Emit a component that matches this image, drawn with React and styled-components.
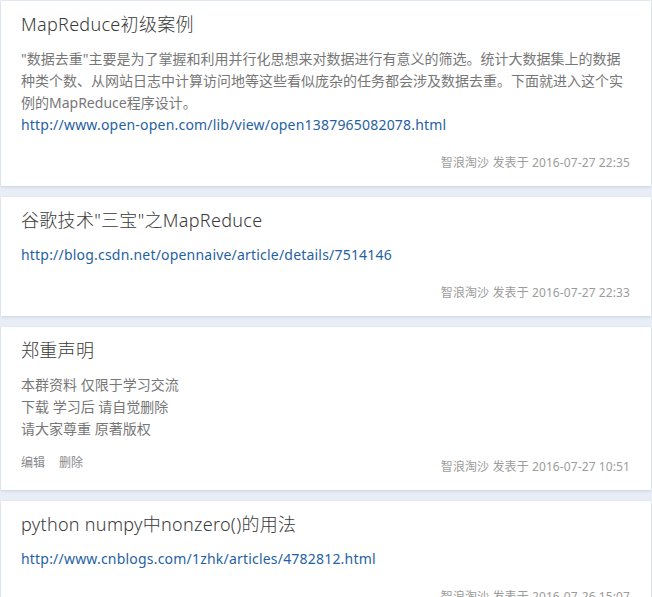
import React from 'react';
import styled, { createGlobalStyle } from 'styled-components';

const GlobalStyle = createGlobalStyle`
	html, body {
		margin: 0;
		padding: 0;
		background-color: #e9eef6;
	}
	body {
		font-family: "Noto Sans", "Noto Sans CJK SC", sans-serif;
		padding: 1px 1px 0 1px;
	}
`

const List = styled.div`
	display: flex;
	flex-direction: column;
	gap: 11px;
`

const Card = styled.div`
	background-color: #fff;
	padding: 11px 21px 14px 20px;
	box-shadow: 0 1px 3px rgba(160, 175, 200, 0.45);
`

const Title = styled.h2`
	margin: 0;
	font-size: 18px;
	font-weight: 300;
	line-height: 24px;
	letter-spacing: 0.3px;
	color: #3a3a3a;
`

const Body = styled.div`
	margin-top: 12px;
	font-size: 14px;
	line-height: 22px;
	color: #777;
`

const Line = styled.div``

const Link = styled.a`
	color: #1f62a3;
	text-decoration: none;
	display: block;
	letter-spacing: 0.2px;
`

const Footer = styled.div`
	display: flex;
	justify-content: space-between;
	align-items: flex-end;
	margin-top: 18px;
	height: 18px;
	font-size: 12px;
	line-height: 18px;
	color: #9c9c9c;
`

const Actions = styled.div`
	display: flex;
	gap: 14px;
	color: #888;
	padding-bottom: 4px;
`

const Action = styled.span`
	cursor: pointer;
`

const Meta = styled.span`
	margin-left: auto;
	letter-spacing: 0.1px;
`

const posts = [
	{
		title: 'MapReduce初级案例',
		desc: '"数据去重"主要是为了掌握和利用并行化思想来对数据进行有意义的筛选。统计大数据集上的数据种类个数、从网站日志中计算访问地等这些看似庞杂的任务都会涉及数据去重。下面就进入这个实例的MapReduce程序设计。',
		link: 'http://www.open-open.com/lib/view/open1387965082078.html',
		time: '2016-07-27 22:35'
	},
	{
		title: '谷歌技术"三宝"之MapReduce',
		link: 'http://blog.csdn.net/opennaive/article/details/7514146',
		time: '2016-07-27 22:33'
	},
	{
		title: '郑重声明',
		lines: ['本群资料 仅限于学习交流', '下载 学习后 请自觉删除', '请大家尊重 原著版权'],
		own: true,
		time: '2016-07-27 10:51'
	},
	{
		title: 'python numpy中nonzero()的用法',
		link: 'http://www.cnblogs.com/1zhk/articles/4782812.html',
		time: '2016-07-26 15:07'
	}
]

const App = () => {
	return (
		<React.Fragment>
			<GlobalStyle />
			<List>
				{posts.map((post, i) => (
					<Card key={i}>
						<Title>{post.title}</Title>
						<Body>
							{post.desc && <Line>{post.desc}</Line>}
							{post.lines && post.lines.map((l, j) => <Line key={j}>{l}</Line>)}
							{post.link && <Link href="#">{post.link}</Link>}
						</Body>
						<Footer>
							{post.own && (
								<Actions>
									<Action>编辑</Action>
									<Action>删除</Action>
								</Actions>
							)}
							<Meta>智浪淘沙 发表于 {post.time}</Meta>
						</Footer>
					</Card>
				))}
			</List>
		</React.Fragment>
	);
};

export default App
